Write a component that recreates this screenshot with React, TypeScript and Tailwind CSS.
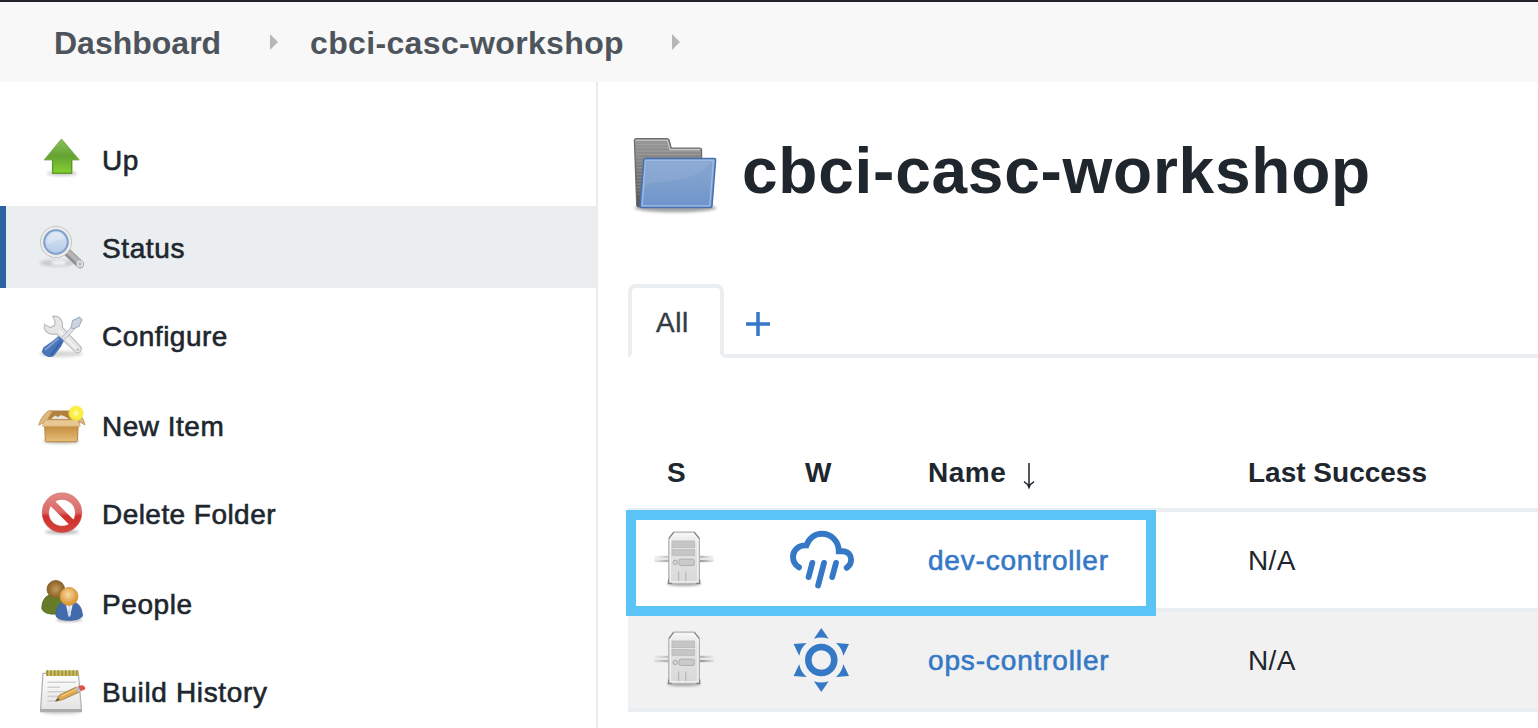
import React from "react";

const medium = "[-webkit-text-stroke:0.6px_currentColor]";

function Defs() {
  return (
    <svg width="0" height="0" className="absolute" aria-hidden="true">
      <defs>
        <filter id="soft" x="-30%" y="-60%" width="160%" height="220%">
          <feGaussianBlur stdDeviation="1.6" />
        </filter>
        <linearGradient id="green" x1="0" y1="0" x2="0" y2="1">
          <stop offset="0" stopColor="#8cc05c" />
          <stop offset="0.5" stopColor="#65a331" />
          <stop offset="1" stopColor="#86d034" />
        </linearGradient>
        <linearGradient id="lens" x1="0" y1="0" x2="0" y2="1">
          <stop offset="0" stopColor="#dbe6f4" />
          <stop offset="1" stopColor="#b4cbe8" />
        </linearGradient>
        <linearGradient id="carton" x1="0" y1="0" x2="0" y2="1">
          <stop offset="0" stopColor="#c38c3d" />
          <stop offset="1" stopColor="#e7bd79" />
        </linearGradient>
        <radialGradient id="spark">
          <stop offset="0" stopColor="#fffdd0" />
          <stop offset="0.4" stopColor="#fbf04b" />
          <stop offset="0.75" stopColor="#f8ec3c" />
          <stop offset="1" stopColor="#f8ec3c" stopOpacity="0" />
        </radialGradient>
        <linearGradient id="red" gradientUnits="userSpaceOnUse" x1="0" y1="4" x2="0" y2="44">
          <stop offset="0" stopColor="#e28886" />
          <stop offset="0.48" stopColor="#dc6866" />
          <stop offset="0.58" stopColor="#cf302c" />
          <stop offset="1" stopColor="#d5433f" />
        </linearGradient>
        <radialGradient id="brownHead">
          <stop offset="0" stopColor="#c09a5e" />
          <stop offset="1" stopColor="#8a6023" />
        </radialGradient>
        <radialGradient id="tanHead" cx="0.45" cy="0.4">
          <stop offset="0" stopColor="#f7dba4" />
          <stop offset="1" stopColor="#dc9a3a" />
        </radialGradient>
        <linearGradient id="folderBack" x1="0" y1="0" x2="0" y2="1">
          <stop offset="0" stopColor="#9a9a9a" />
          <stop offset="0.5" stopColor="#777777" />
          <stop offset="1" stopColor="#555555" />
        </linearGradient>
        <linearGradient id="folderFront" x1="0" y1="0" x2="0" y2="1">
          <stop offset="0" stopColor="#86a6d1" />
          <stop offset="0.5" stopColor="#7d9fce" />
          <stop offset="1" stopColor="#6c94cb" />
        </linearGradient>
        <linearGradient id="tower" x1="0" y1="0" x2="0" y2="1">
          <stop offset="0" stopColor="#f8f8f8" />
          <stop offset="0.25" stopColor="#e4e4e4" />
          <stop offset="1" stopColor="#d9d9d9" />
        </linearGradient>
        <linearGradient id="wire" gradientUnits="userSpaceOnUse" x1="0" y1="0" x2="60" y2="0">
          <stop offset="0" stopColor="#b5b5b5" stopOpacity="0.2" />
          <stop offset="0.2" stopColor="#a8a8a8" />
          <stop offset="0.8" stopColor="#8e8e8e" />
          <stop offset="1" stopColor="#b5b5b5" stopOpacity="0.2" />
        </linearGradient>
        <linearGradient id="paper" x1="0" y1="0" x2="0" y2="1">
          <stop offset="0" stopColor="#ffffff" />
          <stop offset="1" stopColor="#e2e2e2" />
        </linearGradient>
      </defs>
    </svg>
  );
}

function Icon({ children }: { children: React.ReactNode }) {
  return (
    <svg width="48" height="48" viewBox="0 0 48 48" fill="none" className="shrink-0 overflow-visible blur-[0.4px]">
      {children}
    </svg>
  );
}

function UpIcon() {
  return (
    <Icon>
      <ellipse cx="24" cy="38.5" rx="15" ry="2.4" fill="#000" opacity="0.2" filter="url(#soft)" />
      <path d="M23.5 4 41.2 24.9H33.8V38.4H14.4V24.9H6.2Z" fill="url(#green)" stroke="#73a850" strokeWidth="1" strokeLinejoin="round" />
      <path d="M33.6 24.9V38.2H14.6V24.9" stroke="#5d9a22" strokeWidth="1.2" />
    </Icon>
  );
}

function SearchIcon() {
  return (
    <Icon>
      <ellipse cx="19" cy="40" rx="17" ry="3.4" fill="#000" opacity="0.15" filter="url(#soft)" />
      <ellipse cx="21" cy="39.6" rx="8" ry="2.2" fill="#fff" opacity="0.85" filter="url(#soft)" />
      <path d="M28.5 28.5 42 41.2" stroke="#8f8f8f" strokeWidth="8" strokeLinecap="round" />
      <path d="M29 27.6 42.6 40.4" stroke="#b4b4b4" strokeWidth="4.5" strokeLinecap="round" />
      <circle cx="42" cy="41" r="2.8" fill="#c4c4c4" stroke="#e6e6e6" strokeWidth="1.3" />
      <circle cx="18" cy="19" r="13.9" stroke="#bcbcba" strokeWidth="4.2" />
      <circle cx="18" cy="19" r="14" stroke="#ececea" strokeWidth="2.6" />
      <circle cx="18" cy="19" r="11.7" fill="url(#lens)" stroke="#80a0d2" strokeWidth="1.9" />
      <path d="M9 20C9 12 15 8.5 21 9.8C25 11 27 15 25 17C20 16 13 21 9 20Z" fill="#fff" opacity="0.25" />
    </Icon>
  );
}

function ToolsIcon() {
  return (
    <Icon>
      <ellipse cx="23" cy="43" rx="22" ry="3" fill="#000" opacity="0.16" filter="url(#soft)" />
      <path
        d="M14.8 5.2 18.9 5.4C23 6.8 25.4 11.2 24.2 16.2L42.6 35.6C44.8 38.6 42 43 38 41.6L18.4 22.9C13.4 24.6 7.4 22 6.2 16.6L6.6 13.4 12 16.6 16.4 14.6 17.2 10.2Z"
        fill="#e6e6e6"
        stroke="#bdbdbd"
        strokeWidth="1.2"
        strokeLinejoin="round"
      />
      <path d="M21 19.5 39.5 38.8" stroke="#f6f6f6" strokeWidth="1.5" />
      <circle cx="39.6" cy="38.6" r="1.2" fill="#b5b5b5" />
      <path d="M25 27.5 37.5 14.5" stroke="#b4bdc9" strokeWidth="4.6" />
      <path d="M25 27.5 37.5 14.5" stroke="#dfe4ea" strokeWidth="2.6" />
      <path d="M33 16.8 34.6 9.6 41.4 6.2 44 8.8 41 15.2 35.6 17.8Z" fill="#cbd4df" stroke="#a4b2c4" strokeWidth="1.2" strokeLinejoin="round" />
      <path d="M20.6 25 26 29.8 22.8 36 15.8 45C12.2 47.4 5.6 45 3.8 40.4L5.6 36.2 15.2 29.4Z" fill="#4a76b9" />
      <path d="M20 27.8 7.6 38.6" stroke="#7f9fd2" strokeWidth="2" strokeLinecap="round" />
      <path d="M22.6 31.4 13.4 43.8" stroke="#3561a6" strokeWidth="1.8" strokeLinecap="round" />
    </Icon>
  );
}

function BoxIcon() {
  return (
    <Icon>
      <ellipse cx="23" cy="40.4" rx="18" ry="2.2" fill="#000" opacity="0.28" filter="url(#soft)" />
      <path d="M12 10H37L42 22H6Z" fill="#b0803c" stroke="#a98148" />
      <path d="M13 18 17 14.5 20 16 23 14 27 15.6 31 18Z" fill="#e9e4da" />
      <path d="M10.8 9.8 14.5 10 8.6 20 .8 24.2C1.6 19.6 6 12.4 10.8 9.8Z" fill="#dfb880" stroke="#bf965c" strokeWidth="0.9" />
      <path d="M37 10 39.5 10.4C42.8 13.4 46.2 19.4 47 24L40.4 20Z" fill="#dfb880" stroke="#bf965c" strokeWidth="0.9" />
      <path d="M6.6 24.6H40.2L39.4 39.6Q39.2 40.8 38 40.8H8.8Q7.6 40.8 7.4 39.6Z" fill="url(#carton)" stroke="#b38642" />
      <path d="M7 19H40L42.2 25.2H4.4Z" fill="#e9c795" stroke="#cfa970" strokeWidth="0.8" />
      <circle cx="38" cy="12.2" r="8.4" fill="url(#spark)" />
    </Icon>
  );
}

function StopIcon() {
  return (
    <Icon>
      <ellipse cx="24" cy="43" rx="17" ry="2.2" fill="#000" opacity="0.28" filter="url(#soft)" />
      <circle cx="24" cy="23.7" r="16.6" stroke="#c04a47" strokeWidth="7.2" strokeOpacity="0.7" />
      <path d="M12.8 12.6 35.2 35" stroke="url(#red)" strokeWidth="6.6" />
      <circle cx="24" cy="23.7" r="16.6" stroke="url(#red)" strokeWidth="6" />
    </Icon>
  );
}

function PeopleIcon() {
  return (
    <Icon>
      <ellipse cx="31" cy="40.6" rx="13" ry="2" fill="#000" opacity="0.35" filter="url(#soft)" />
      <path d="M12 16C5.6 17.4 3.6 25 4 30C6 34.6 14 36 20 34.6L28 28 24 16Z" fill="#667c28" stroke="#53681d" />
      <circle cx="17.8" cy="10.2" r="8.8" fill="url(#brownHead)" stroke="#81602b" strokeWidth="0.8" />
      <path d="M25 23.5C19.6 25 17.8 32 18 37C20 42.6 42 42.6 44.4 37C44.2 31 42 25.4 37 23.5Z" fill="#426bae" stroke="#3d65a8" />
      <path d="M28 26H34.6L32 37.5H30.6Z" fill="#eef2f8" />
      <path d="M30.6 27 29.8 35.5 31.4 38 32.8 35.5 32.2 27Z" fill="#cfdbea" />
      <circle cx="31" cy="17.4" r="9" fill="url(#tanHead)" stroke="#cf9439" strokeWidth="0.8" />
    </Icon>
  );
}

function NotepadIcon() {
  return (
    <Icon>
      <ellipse cx="23" cy="45" rx="20" ry="2" fill="#000" opacity="0.2" filter="url(#soft)" />
      <path d="M5 6.4H40.4L43.4 42.2V44.6H2.6V42.2Z" fill="url(#paper)" stroke="#b0b0b0" strokeWidth="1.2" strokeLinejoin="round" />
      <path d="M3 43H43.2" stroke="#ababab" strokeWidth="2" />
      <path d="M9.4 15.2H38M9.4 20.3H22M9.4 24.8H32M9.4 29.4H21M9.4 34H19.5" stroke="#cfcfcf" strokeWidth="1.6" />
      <rect x="8" y="3.4" width="32.6" height="5.6" fill="#c9ba5e" />
      <path d="M8.6 6.2H40" stroke="#9c8f3c" strokeWidth="5.8" strokeDasharray="1.4 2.3" />
      <path d="M17.5 34.2 21.6 28 38.4 20 41.6 25 24.2 32.8Z" fill="#dda84e" stroke="#a3814a" strokeWidth="0.9" strokeLinejoin="round" />
      <path d="M23.5 29.2 39 21.8" stroke="#f0c878" strokeWidth="1.3" />
      <path d="M17.5 34.2 20 31 21.4 32.8Z" fill="#514632" />
      <path d="M37.2 21 40.4 19.2 43.2 23.8 40 25.4Z" fill="#b9bec6" />
      <path d="M40.2 19.2C43.8 16.6 48 19.2 47.2 22.2L42.8 24.2Z" fill="#dd5552" />
    </Icon>
  );
}

function FolderIcon() {
  return (
    <svg width="92" height="84" viewBox="0 0 92 84" fill="none" className="shrink-0 blur-[0.3px]">
      <ellipse cx="45.500" cy="74" rx="41" ry="4.2" fill="#000" opacity="0.36" filter="url(#soft)" />
      <path d="M4.4 6.6Q4.4 4.6 6.4 4.6H36.6Q39 4.6 39.4 6.8L41.2 14H69.6Q71.6 14 71.6 16V73H8.6Q6.8 73 6.7 71Z" fill="url(#folderBack)" stroke="#6b6b6b" strokeWidth="1.2" />
      <path d="M6.2 7V6.2H37.4L40 15.6H70" stroke="#c9c9c9" strokeWidth="1.1" />
      <path
        d="M6 10.500H38M6 13.8H39M6 17.1H70M6 20.4H70M6 23.7H14M7 27H14M7 30.3H14M7 33.6H13M7 36.9H13M7 40.2H13M7 43.500H12M7 46.8H12M7 50.1H12M7 53.4H12M8 56.7H11M8 60H11"
        stroke="#b6b6b6"
        strokeOpacity="0.38"
        strokeWidth="1.1"
      />
      <path d="M15.6 24.4H84Q85.8 24.4 85.6 26.2L82 71.6Q81.8 73.6 79.8 73.6H11.6Q9.8 73.6 10 71.6L13.8 26.2Q14 24.4 15.6 24.4Z" fill="url(#folderFront)" stroke="#4770b0" strokeWidth="1.500" />
      <path d="M15.4 26.4H83.4L79.8 71.8H12.2Z" stroke="#a3bde1" strokeWidth="1.2" />
      <path d="M14.2 52C31 45 45 49 62 42C72 38 76 34 81.8 27.4H16.2Z" fill="#fff" opacity="0.07" />
    </svg>
  );
}

function ServerIcon() {
  return (
    <svg width="60" height="60" viewBox="0 0 60 60" fill="none" className="block blur-[0.4px]">
      <rect x="0" y="25.8" width="60" height="6.4" rx="2" fill="url(#wire)" opacity="0.6" />
      <rect x="1" y="28" width="58" height="1.800" fill="#ececec" />
      <rect x="0" y="30.4" width="60" height="1.2" fill="url(#wire)" />
      <ellipse cx="30" cy="54" rx="16.500" ry="1.8" fill="#000" opacity="0.4" filter="url(#soft)" />
      <path d="M19.8 2.2H40.2L45.4 8.6V49L46 53.8H14L14.8 49V8.6Z" fill="url(#tower)" stroke="#b0b0b0" strokeWidth="1.2" />
      <path d="M19.6 2.4 15 8.4M40.4 2.4 45.2 8.4M14.6 49.6V53.4H18M45.6 49.6V53.4H42" stroke="#858585" strokeWidth="1.2" />
      <path d="M20.3 3.8H39.7L43.8 9V51.8H16.4V9Z" stroke="#f7f7f7" strokeWidth="1" />
      <rect x="18" y="11" width="22.4" height="6.6" fill="#c6c6c6" stroke="#b8b8b8" strokeWidth="0.8" />
      <rect x="18" y="19.7" width="22.4" height="5.6" fill="#c6c6c6" stroke="#b8b8b8" strokeWidth="0.8" />
      <rect x="25" y="29.2" width="15.2" height="6.2" rx="1.4" fill="#cbcbcb" stroke="#adadad" />
      <circle cx="21.2" cy="32.4" r="2.2" fill="#d4d4d4" stroke="#a8a8a8" />
      <path d="M24.6 41.500V51M31.8 41.500V51" stroke="#b8b8b8" strokeWidth="1.3" />
    </svg>
  );
}

function RainIcon() {
  return (
    <svg width="68" height="64" viewBox="0 0 68 64" fill="none" stroke="#3478c6" strokeWidth="5.9" strokeLinecap="round" className="block">
      <path d="M10.9 39.3C7 36.8 5 33 5 28.7C5 22 10.6 17 18.4 17.4C21 10.2 27 5.7 33.9 5.7C43.2 5.7 50.8 13.2 50.8 23.2H54.8C60 23.2 63.1 27.4 63.1 31.6C63.1 34.8 61.6 37.8 58.7 39.8" />
      <path d="M24.3 34.9 20.6 49.1M36 34.9 30.1 57.5M48 34.9 44.2 49.1" strokeWidth="5.8" />
    </svg>
  );
}

const rays = [0, 60, 120, 180, 240, 300];

function SunIcon() {
  return (
    <svg width="68" height="64" viewBox="-33.3 -32 68 64" className="block">
      <circle r="13" fill="none" stroke="#3478c6" strokeWidth="6.5" />
      {rays.map((a) => (
        <path key={a} d="M0-32 7.4-21.2Q0-23.8-7.4-21.2Z" fill="#3478c6" transform={`rotate(${a})`} />
      ))}
    </svg>
  );
}

function Chevron() {
  return (
    <svg width="8" height="16" viewBox="0 0 8 16" className="shrink-0">
      <path d="M0 0 8 8 0 16Z" fill="#b7b7b7" />
    </svg>
  );
}

const items = [
  { label: "Up", icon: <UpIcon />, gap: "mb-1.5", track: "tracking-[0.5px]" },
  { label: "Status", icon: <SearchIcon />, gap: "mb-1.5", track: "tracking-[0.6px]", active: true },
  { label: "Configure", icon: <ToolsIcon />, gap: "mb-2", track: "tracking-[0.5px]" },
  { label: "New Item", icon: <BoxIcon />, gap: "mb-1.5", track: "tracking-[0.5px]" },
  { label: "Delete Folder", icon: <StopIcon />, gap: "mb-2", track: "tracking-[0.45px]" },
  { label: "People", icon: <PeopleIcon />, gap: "mb-1.5", track: "tracking-[0.6px]" },
  { label: "Build History", icon: <NotepadIcon />, gap: "", track: "tracking-[0.65px]" },
];

const rows = [
  { name: "dev-controller", weather: <RainIcon />, bg: "bg-white", track: "tracking-[0.8px]" },
  { name: "ops-controller", weather: <SunIcon />, bg: "bg-[#f1f1f1]", track: "tracking-[0.85px]" },
];

const columns = "grid grid-cols-[134px_166px_320px_1fr]";

export default function App() {
  return (
    <div className="flex h-[728px] w-full flex-col overflow-hidden bg-white font-['Liberation_Sans',Arial,sans-serif] text-[28px] text-[#20262d]">
      <Defs />
      <header className="flex h-[82px] shrink-0 items-center border-t-2 border-[#212429] bg-[#f8f8f8] pl-[54px] text-[32px] font-bold text-[#4d545c]">
        <a className="w-[216px] whitespace-nowrap pt-0.5 tracking-[0px]">Dashboard</a>
        <Chevron />
        <a className="ml-8 w-[362px] whitespace-nowrap pt-0.5 tracking-[0.35px]">cbci-casc-workshop</a>
        <Chevron />
      </header>

      <div className="flex min-h-0 flex-1">
        <nav className="flex w-[598px] shrink-0 flex-col border-r-2 border-[#ebebeb] pt-9">
          {items.map((it) => (
            <a
              key={it.label}
              className={`flex h-[82px] shrink-0 items-center gap-4 border-l-6 pl-8 ${it.gap} ${
                it.active ? "border-[#2a62a4] bg-[#eaeef1]" : "border-transparent"
              }`}
            >
              {it.icon}
              <span className={`whitespace-nowrap pt-1 ${medium} ${it.track}`}>{it.label}</span>
            </a>
          ))}
        </nav>

        <main className="min-w-0 flex-1 pl-[30px]">
          <div className="flex h-[202px] items-start pt-[52px]">
            <div className="pl-0.5">
              <FolderIcon />
            </div>
            <h1 className="ml-5 whitespace-nowrap text-[64px] font-bold leading-[74px] tracking-[0.75px]">cbci-casc-workshop</h1>
          </div>

          <div className="flex h-[74px]">
            <div className="flex w-24 justify-start rounded-t-lg border-4 border-[#eaeef1] border-b-white pl-6 pt-[19px] leading-8 tracking-[0.5px] text-[#333a42] [-webkit-text-stroke:0.4px_currentColor]">
              All
            </div>
            <div className="flex flex-1 border-b-4 border-[#eaeef1] pl-[22px] pt-7">
              <svg width="24" height="24" viewBox="0 0 24 24">
                <path d="M12 0V24M0 12H24" stroke="#3478c6" strokeWidth="3.5" />
              </svg>
            </div>
          </div>

          <div className="relative mt-[78px]">
            <div className={`${columns} h-[76px] items-center border-b-4 border-[#eaeef1] font-bold`}>
              <span className="pl-[39px] pt-0.5">S</span>
              <span className="pl-[43px] pt-0.5">W</span>
              <span className="flex items-center pt-0.5">
                <span className="tracking-[0.5px]">Name</span>
                <svg width="12" height="26" viewBox="0 0 12 26" className="ml-[17px] mt-[5px]" fill="none" stroke="#20262d" strokeWidth="1.5">
                  <path d="M6 0V24.5M1 18.6Q4.5 20.5 6 24.5Q7.500 20.5 11 18.6" />
                </svg>
              </span>
              <span className="pt-0.5">Last Success</span>
            </div>
            {rows.map((r) => (
              <div key={r.name} className={`${columns} h-[100px] items-center border-b-4 border-[#eaeef1] ${r.bg}`}>
                <div className="pl-[26px]">
                  <ServerIcon />
                </div>
                <div className="pl-[26px]">{r.weather}</div>
                <a className={`whitespace-nowrap pt-0.5 text-[#3478c6] ${r.track} ${medium}`}>{r.name}</a>
                <span className="pt-0.5 tracking-[0.4px]">N/A</span>
              </div>
            ))}
            <div className="pointer-events-none absolute -left-0.5 top-[74px] h-[106px] w-[530px] border-10 border-[#5ac4f6]" />
          </div>
        </main>
      </div>
    </div>
  );
}
